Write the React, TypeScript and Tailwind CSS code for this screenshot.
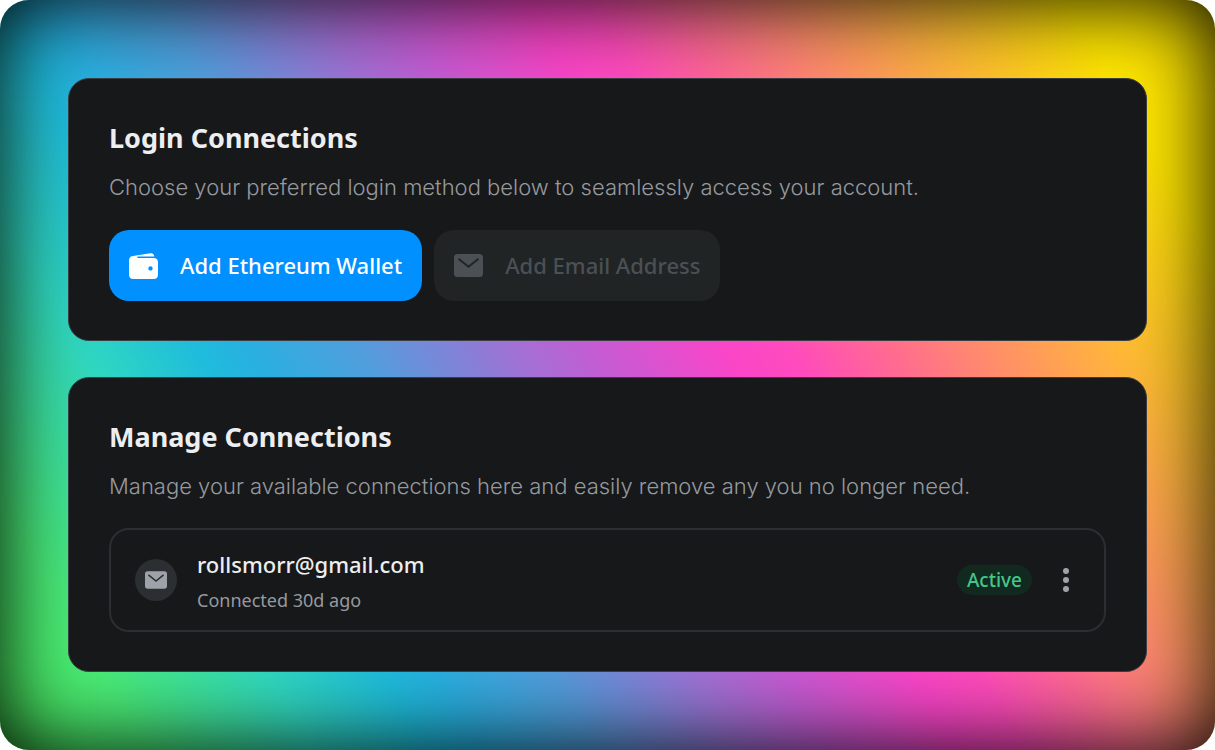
import React from 'react';

function WalletIcon() {
  return (
    <svg viewBox="0 0 29 26" className="h-[26px] w-[29px]" aria-hidden="true">
      <path
        fill="currentColor"
        fillRule="evenodd"
        d="M.8 4.800C1.400 3.600 2.500 3.100 4 2.900L21.400.2c2.200-.3 3.700 1 3.900 3.300H9.500c-.8 0-1.400.3-1.400.7s.5.7 1.300.7h15.300c2.700 0 4.300 1.600 4.300 4.200V21.700c0 2.700-1.600 4.300-4.300 4.300H4.300C1.600 26 0 24.400 0 21.700V8.200c0-1.400.2-2.500.8-3.400ZM21.500 13.200a2.200 2.200 0 1 0 0 4.400 2.200 2.200 0 0 0 0-4.400Z"
      />
    </svg>
  );
}

function MailIcon({ className, stroke }: { className: string; stroke: string }) {
  return (
    <svg viewBox="0 0 29 23" className={className} aria-hidden="true">
      <rect width="29" height="23" rx="3.500" fill="currentColor" />
      <path d="M4.500 4.800 14.500 12.800 24.500 4.800" fill="none" stroke={stroke} strokeWidth="2" />
    </svg>
  );
}

function Card({ title, text, children }: { title: string; text: string; children: React.ReactNode }) {
  return (
    <section className="rounded-[21px] border border-[#3a3d42] bg-[#17181a] px-10 py-[39px]">
      <h2 className="font-['Noto_Sans'] text-[27px] leading-10 font-bold text-[#edeef0]">{title}</h2>
      <p className="mt-[11px] font-['Inter'] text-[22px] leading-9 font-light text-[#969a9f]">{text}</p>
      {children}
    </section>
  );
}

export default function App() {
  return (
    <main className="flex min-h-screen flex-col gap-9 rounded-[29px] bg-[linear-gradient(60deg,#4cf05c_0%,#4aec78_9%,#30d8c0_19%,#1fbcdc_26%,#28b0e0_29%,#529ddc_36%,#9f72d5_45%,#c45cd4_50%,#fa45c8_58%,#ff4bbc_62%,#ff6b90_68%,#ff8870_73%,#ffb838_82%,#ffe600_91%)] px-[68px] py-[78px] font-['Noto_Sans',sans-serif] shadow-[inset_0_0_84px_#000]">
      <Card title="Login Connections" text="Choose your preferred login method below to seamlessly access your account.">
        <div className="mt-[25px] flex flex-wrap gap-3">
          <button type="button" className="flex h-[71px] items-center gap-[22px] rounded-[20px] bg-[#0090ff] px-5 text-[22px] font-medium text-white">
            <WalletIcon />
            Add Ethereum Wallet
          </button>
          <button type="button" disabled className="flex h-[71px] items-center gap-[22px] rounded-[20px] bg-[#202425] px-5 text-[22px] font-medium text-[#4b5055]">
            <MailIcon className="h-[23px] w-[29px]" stroke="#202425" />
            Add Email Address
          </button>
        </div>
      </Card>
      <Card title="Manage Connections" text="Manage your available connections here and easily remove any you no longer need.">
        <div className="mt-6 flex items-center rounded-[20px] border-2 border-[#2c2e31] px-6 py-3">
          <span className="flex size-[42px] items-center justify-center rounded-full bg-[#2b2f31] text-[#9ea3ab]">
            <MailIcon className="h-[18px] w-[22px]" stroke="#2b2f31" />
          </span>
          <div className="ml-5 flex-1 pt-1">
            <p className="text-[22px] leading-9 font-medium text-[#edeef0]">rollsmorr@gmail.com</p>
            <p className="text-[18px] leading-9 text-[#969a9f]">Connected 30d ago</p>
          </div>
          <span className="rounded-full bg-[#11291f] px-2.5 text-[19px] leading-[30px] font-medium text-[#46c588]">Active</span>
          <button type="button" aria-label="Connection options" className="ml-5 flex h-9 w-7 items-center justify-center text-[#9ea3ab]">
            <svg viewBox="0 0 6 24" className="h-6 w-1.5" fill="currentColor" aria-hidden="true">
              <circle cx="3" cy="3" r="3" />
              <circle cx="3" cy="12" r="3" />
              <circle cx="3" cy="21" r="3" />
            </svg>
          </button>
        </div>
      </Card>
    </main>
  );
}
